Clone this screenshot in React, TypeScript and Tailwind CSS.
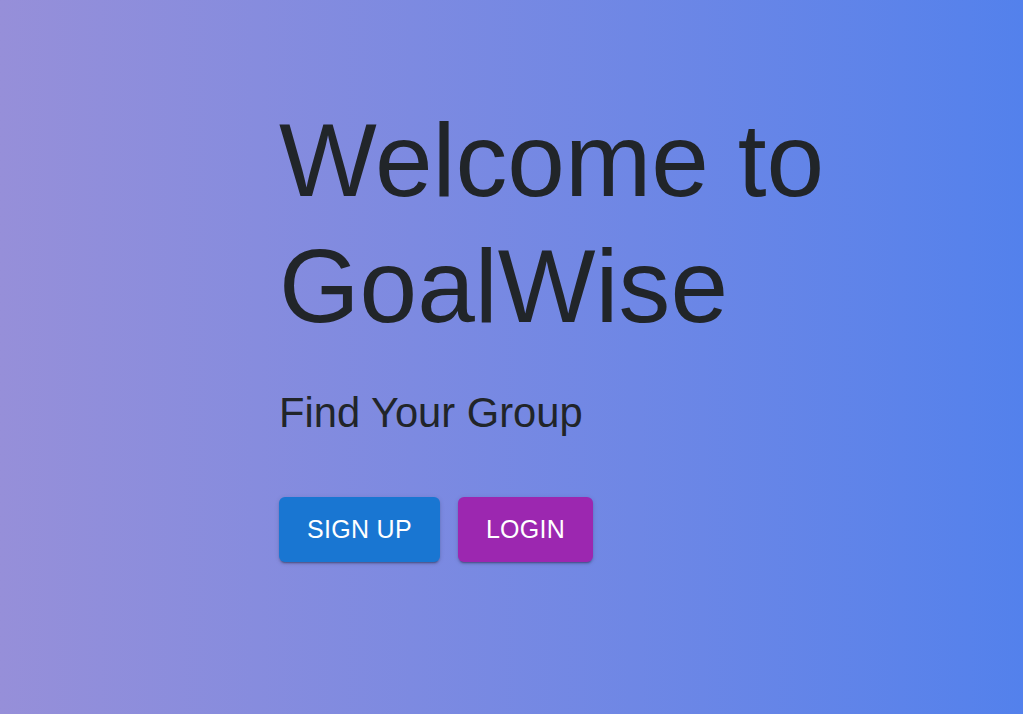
const App = () => {
  return (
    <div
      className="min-h-screen w-full bg-linear-to-r from-[#968fd9] to-[#5381ec] text-[#212529]"
      style={{ fontFamily: '"Liberation Sans", Arial, sans-serif' }}
    >
      <div className="pl-[279px] pt-[97px]">
        <h1 className="text-[103.6px] leading-[126px] font-normal">
          Welcome to
          <br />
          GoalWise
        </h1>
        <p className="mt-[39px] text-[41.7px] leading-[50px]">Find Your Group</p>

        <div className="mt-[59px] flex gap-[18px]">
          <button
            type="button"
            className="h-[65px] px-[28px] rounded-[6px] bg-[#1976d2] text-white text-[25px] tracking-[0.3px] uppercase shadow-[0_3px_1px_-2px_rgba(0,0,0,0.2),0_2px_2px_0_rgba(0,0,0,0.14),0_1px_5px_0_rgba(0,0,0,0.12)]"
          >
            Sign Up
          </button>
          <button
            type="button"
            className="h-[65px] px-[28px] rounded-[6px] bg-[#9c27b0] text-white text-[25px] tracking-[0.3px] uppercase shadow-[0_3px_1px_-2px_rgba(0,0,0,0.2),0_2px_2px_0_rgba(0,0,0,0.14),0_1px_5px_0_rgba(0,0,0,0.12)]"
          >
            Login
          </button>
        </div>
      </div>
    </div>
  );
};

export default App;
